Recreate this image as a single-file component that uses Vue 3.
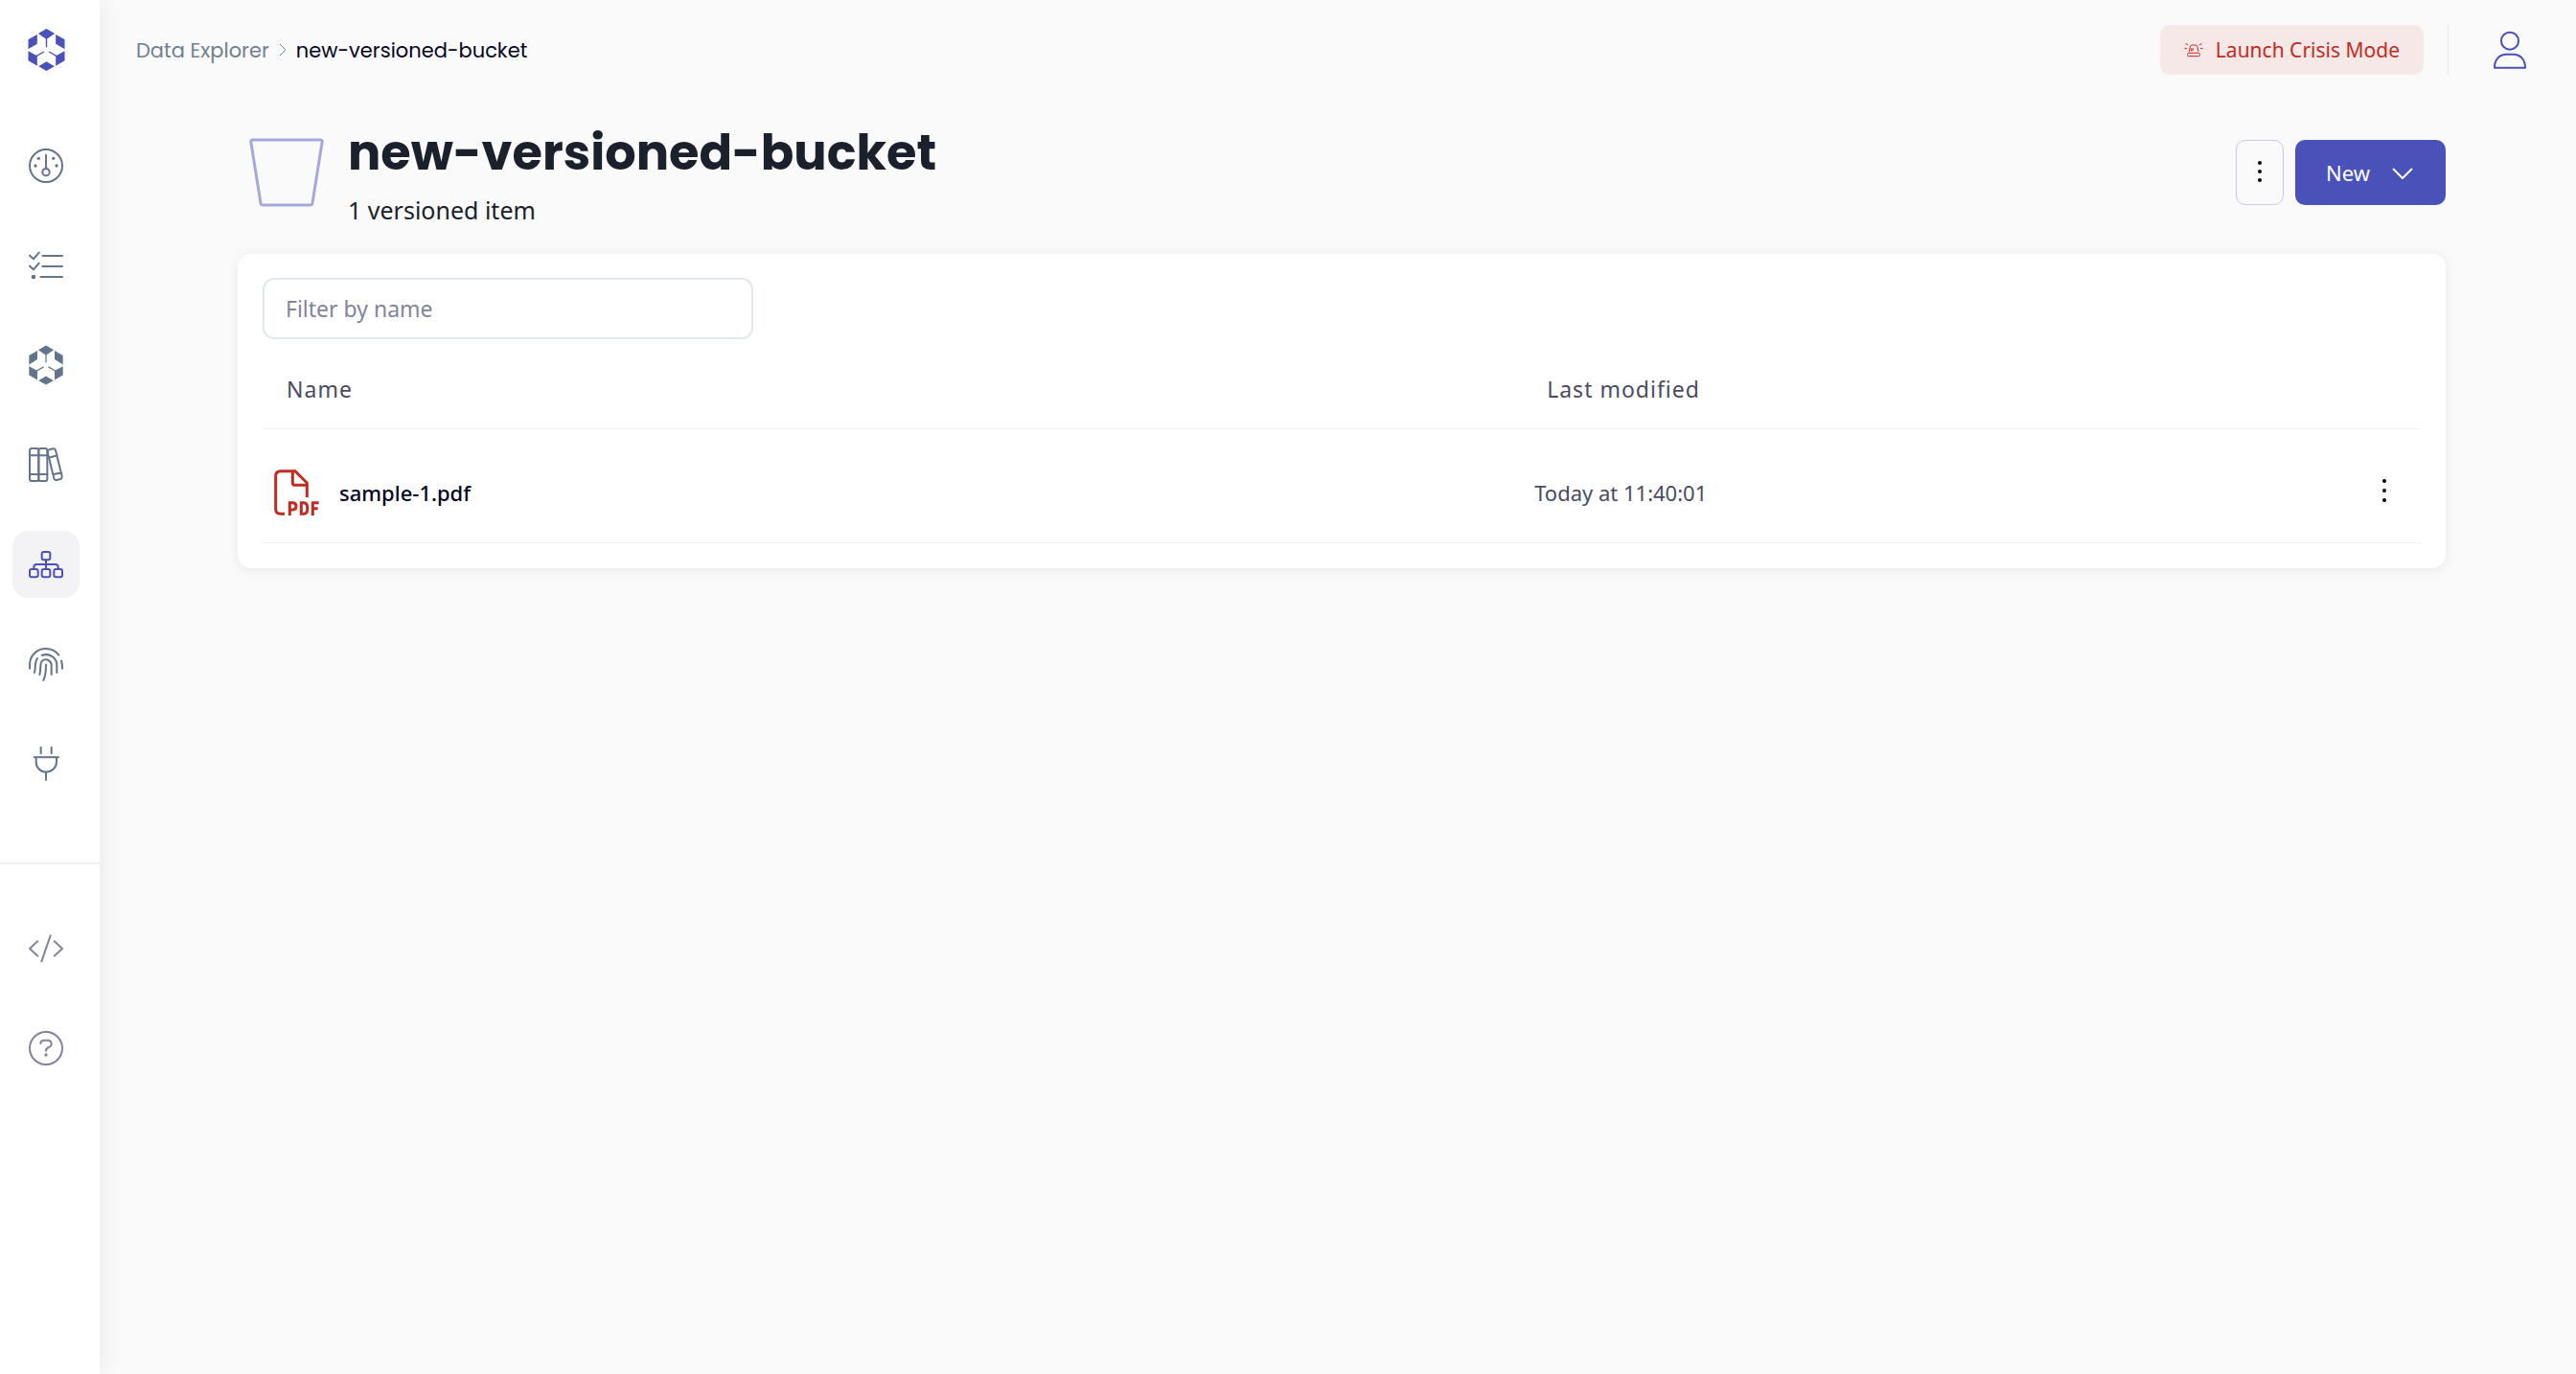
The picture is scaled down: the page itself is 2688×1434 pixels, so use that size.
<script setup>
import { ref, computed } from 'vue'

const filter = ref('')
const files = [{ name: 'sample-1.pdf', modified: 'Today at 11:40:01' }]
const shown = computed(() =>
  files.filter((f) => f.name.toLowerCase().includes(filter.value.toLowerCase()))
)
</script>

<template>
  <div class="app">
    <aside class="sidebar">
      <a class="logo" href="#" aria-label="Home">
        <svg width="39" height="44" viewBox="0 0 116 132" fill="currentColor">
          <path d="M58 0 84 15 58 33 32 15zM1 34 29 18v29L1 64zM87 18l28 16v30L87 47zM1 70l26 14 2 2v30L1 100zM115 70 89 84l-2 2v30l28-16zM58 103l25 15-25 14-25-14z" />
          <path d="M58 28v30M26 86l24-14M90 86 66 72" fill="none" stroke="currentColor" stroke-width="4" />
        </svg>
      </a>
      <nav class="nav" aria-label="Main">
        <a class="item" href="#" aria-label="Dashboard">
          <svg class="ico" viewBox="0 0 108 108">
            <circle cx="54" cy="54" r="51" />
            <circle cx="54" cy="74" r="11" />
            <path d="M54 62V20" />
            <g class="solid"><circle cx="21" cy="54" r="5" /><circle cx="87" cy="54" r="5" /><circle cx="31" cy="31" r="5" /><circle cx="77" cy="31" r="5" /></g>
          </svg>
        </a>
        <a class="item" href="#" aria-label="Tasks">
          <svg class="ico" viewBox="0 0 108 108">
            <path d="M3 23l12 11 17-20M3 56l12 11 17-20M43 24h62M43 57h62M37 90h68" />
            <g class="solid"><circle cx="15" cy="90" r="7" /></g>
          </svg>
        </a>
        <a class="item" href="#" aria-label="Platform">
          <svg width="36" height="42" viewBox="0 0 116 132" fill="currentColor">
            <path d="M58 0 84 15 58 33 32 15zM1 34 29 18v29L1 64zM87 18l28 16v30L87 47zM1 70l26 14 2 2v30L1 100zM115 70 89 84l-2 2v30l28-16zM58 103l25 15-25 14-25-14z" />
            <path d="M58 28v30M26 86l24-14M90 86 66 72" fill="none" stroke="currentColor" stroke-width="4" />
          </svg>
        </a>
        <a class="item" href="#" aria-label="Library">
          <svg class="ico" viewBox="0 0 108 108">
            <rect x="3" y="3" width="28" height="102" rx="7" />
            <rect x="31" y="3" width="27" height="102" rx="7" />
            <path d="M3 25h55M3 84h55" />
            <path d="M64 7l12-3q6-1 8 5l20 81q1 7-5 9l-12 3q-6 1-8-5L59 16q-1-7 5-9zM63 32l26-7M76 85l26-6" />
          </svg>
        </a>
        <a class="item active" href="#" aria-label="Data Explorer" aria-current="page">
          <svg class="ico" viewBox="0 0 108 108">
            <rect x="41" y="15" width="26" height="25" rx="6" />
            <rect x="3" y="69" width="26" height="25" rx="6" />
            <rect x="41" y="69" width="26" height="25" rx="6" />
            <rect x="79" y="69" width="26" height="25" rx="6" />
            <path d="M54 40v29M16 69v-6q0-9 9-9h58q9 0 9 9v6" />
          </svg>
        </a>
        <a class="item" href="#" aria-label="Identity">
          <svg class="ico" viewBox="0 0 108 108">
            <path d="M3 68V57C3 27 26 6 54 6c16 0 30 7 40 20M102 44q3 8 3 24" />
            <path d="M18 81c4-12-1-30 9-45M41 27c24-9 47 8 47 31v23" />
            <path d="M34 87c5-12-1-34 8-43 10-9 27-2 29 12v31" />
            <path d="M54 56c0 18-1 34-8 49" />
          </svg>
        </a>
        <a class="item" href="#" aria-label="Connections">
          <svg class="ico" viewBox="0 0 108 108">
            <path d="M38 3v19M71 3v19M17 34h76M23 34v15c0 18 14 31 31 31s33-13 33-31V34M54 80v25" />
          </svg>
        </a>
      </nav>
      <nav class="nav nav-low" aria-label="Support">
        <a class="item" href="#" aria-label="Developers">
          <svg class="ico" viewBox="0 0 108 108">
            <path d="M28 31 3 54l25 23M80 31l25 23-25 23M68 13 40 94" />
          </svg>
        </a>
        <a class="item" href="#" aria-label="Help">
          <svg class="ico" viewBox="0 0 108 108">
            <circle cx="54" cy="54" r="51" />
            <path d="M37 39q0-9 10-10h14q10 1 10 11 0 8-8 11-9 3-9 11" />
            <g class="solid"><circle cx="54" cy="75" r="5" /></g>
          </svg>
        </a>
      </nav>
    </aside>

    <div class="page">
      <header class="topbar">
        <nav class="crumbs" aria-label="Breadcrumb">
          <a href="#">Data Explorer</a>
          <svg width="8" height="14" viewBox="0 0 8 14"><path d="M1 1l6 6-6 6" fill="none" stroke="currentColor" /></svg>
          <span class="here">new-versioned-bucket</span>
        </nav>
        <div class="top-actions">
          <button class="crisis" type="button">
            <svg width="20" height="16" viewBox="0 0 60 48" fill="none" stroke="currentColor" stroke-width="3">
              <path d="M16 30l3-15q1-6 7-6h9q6 0 7 6l3 15M22 28l2-10M27 28l1-9" />
              <rect x="11" y="34" width="38" height="10" rx="3" />
              <path d="M1 20h8M51 20h8M4 5l8 3M56 5l-8 3" />
            </svg>
            Launch Crisis Mode
          </button>
          <button class="user" type="button" aria-label="Account">
            <svg width="34" height="40" viewBox="0 0 102 120" fill="none" stroke="currentColor" stroke-width="6" stroke-linejoin="round">
              <circle cx="51" cy="32" r="27" />
              <path d="M3 116c0-25 14-42 38-42h20c24 0 38 17 38 42z" />
            </svg>
          </button>
        </div>
      </header>

      <main class="content">
        <div class="heading">
          <svg class="bucket" width="78" height="72" viewBox="0 0 78 72">
            <path d="M4 2h70q3 0 2 3l-10 63q0 2-3 2H15q-3 0-3-2L2 5q-1-3 2-3z" fill="none" stroke="currentColor" stroke-width="3" />
          </svg>
          <div class="titles">
            <h1>new-versioned-bucket</h1>
            <p>1 versioned item</p>
          </div>
          <div class="actions">
            <button class="more" type="button" aria-label="More actions">
              <svg width="4" height="24" viewBox="0 0 4 24"><circle cx="2" cy="2" r="2" /><circle cx="2" cy="11" r="2" /><circle cx="2" cy="20" r="2" /></svg>
            </button>
            <button class="new" type="button">
              New
              <svg width="22" height="14" viewBox="0 0 22 14"><path d="M1 3l10 10L21 3" fill="none" stroke="currentColor" stroke-width="2" /></svg>
            </button>
          </div>
        </div>

        <section class="card">
          <input v-model="filter" class="filter" type="text" placeholder="Filter by name" aria-label="Filter by name" />
          <table>
            <thead>
              <tr>
                <th class="c-name" scope="col">Name</th>
                <th scope="col">Last modified</th>
                <th class="c-menu"></th>
              </tr>
            </thead>
            <tbody>
              <tr v-for="f in shown" :key="f.name">
                <td>
                  <a class="file" href="#">
                    <svg width="48" height="48" viewBox="0 0 144 144" fill="none" stroke="currentColor" stroke-width="9">
                      <path d="M33 139H20q-15 0-15-15V20Q5 5 20 5h46l37 37v45M58 5v36q0 8 8 8h40" />
                      <path d="M49 144v-40h9q11 0 11 11t-11 11h-9M85 104h6q13 0 13 13v9q0 13-13 13h-6zM121 144v-40h19M121 122h16" />
                    </svg>
                    {{ f.name }}
                  </a>
                </td>
                <td class="date">{{ f.modified }}</td>
                <td class="menu">
                  <button class="row-more" type="button" aria-label="File actions">
                    <svg width="4" height="28" viewBox="0 0 4 28"><circle cx="2" cy="2" r="2" /><circle cx="2" cy="12" r="2" /><circle cx="2" cy="22" r="2" /></svg>
                  </button>
                </td>
              </tr>
            </tbody>
          </table>
        </section>
      </main>
    </div>
  </div>
</template>

<style>
body {
  background: #fafafa;
}
</style>

<style scoped>
.app {
  display: flex;
  min-height: 100vh;
  background: #fafafa;
  color: #05051e;
  font-family: "Noto Sans", sans-serif;
  font-size: 22px;
}
.app *,
.app *::before {
  box-sizing: border-box;
}
a {
  color: inherit;
  text-decoration: none;
}
button {
  font: inherit;
  border: 0;
  padding: 0;
  background: none;
  cursor: pointer;
}
svg {
  display: block;
  flex: none;
}

.sidebar {
  flex: none;
  width: 104px;
  background: #fff;
  box-shadow: 0 0 24px rgba(0, 0, 0, 0.08);
}
.logo {
  display: flex;
  justify-content: center;
  padding: 30px 8px 0 0;
  height: 104px;
  color: #4a52ba;
}
.nav {
  display: flex;
  flex-direction: column;
  align-items: center;
  gap: 34px;
  padding: 34px 9px 68px 0;
  color: #64748b;
}
.nav-low {
  border-top: 2px solid #f0f0f2;
  padding-top: 53px;
  color: #83849b;
}
.item {
  display: grid;
  place-items: center;
  width: 70px;
  height: 70px;
  border-radius: 16px;
}
.active {
  background: #f3f3f5;
  color: #4a52ba;
}
.ico {
  width: 36px;
  height: 36px;
  fill: none;
  stroke: currentColor;
  stroke-width: 6;
  stroke-linecap: round;
  stroke-linejoin: round;
}
.solid {
  fill: currentColor;
  stroke: none;
}

.page {
  flex: 1;
  min-width: 0;
}
.topbar {
  display: flex;
  justify-content: space-between;
  align-items: center;
  height: 104px;
  padding: 0 52px 0 38px;
}
.crumbs {
  display: flex;
  align-items: center;
  gap: 10px;
  color: #718090;
  font-family: Poppins, Inter, sans-serif;
  font-size: 21px;
}
.here {
  color: #05051e;
}
.top-actions {
  display: flex;
  align-items: center;
}
.crisis {
  display: flex;
  align-items: center;
  gap: 13px;
  height: 52px;
  padding: 0 25px;
  border-radius: 10px;
  background: #f6e8e7;
  color: #c12b23;
  font-size: 21px;
}
.user {
  display: flex;
  align-items: center;
  height: 52px;
  margin-left: 25px;
  padding-left: 47px;
  border-left: 1px solid #e2e8f0;
  color: #4a52ba;
}

.content {
  padding: 0 136px 64px 144px;
}
.heading {
  display: flex;
  align-items: center;
  height: 161px;
  padding: 0 0 10px 12px;
}
.bucket {
  color: #a5a8dc;
}
.titles {
  flex: 1;
  margin: 6px 0 0 25px;
}
h1 {
  margin: 0;
  color: #1a202c;
  font-family: Poppins, Inter, sans-serif;
  font-size: 51px;
  font-weight: 700;
  line-height: 64px;
}
p {
  margin: 8px 0 0;
  color: #1a202c;
  font-size: 25px;
  line-height: 40px;
}
.actions {
  display: flex;
  gap: 12px;
}
.more {
  display: grid;
  place-items: center;
  width: 50px;
  height: 68px;
  border: 1px solid #c7c9e8;
  border-radius: 10px;
}
.new {
  display: flex;
  align-items: center;
  gap: 23px;
  height: 68px;
  padding: 0 34px 0 32px;
  border-radius: 10px;
  background: #4a52ba;
  color: #fff;
}

.card {
  padding: 25px 26px 26px;
  border-radius: 14px;
  background: #fff;
  box-shadow: 0 2px 12px rgba(0, 0, 0, 0.08);
}
.filter {
  display: block;
  width: 512px;
  max-width: 100%;
  height: 64px;
  padding: 0 22px;
  border: 2px solid #e2e8f0;
  border-radius: 12px;
  background: #fff;
  color: #05051e;
  font: inherit;
  font-size: 23px;
}
.filter::placeholder {
  color: #83849b;
  opacity: 1;
}
table {
  width: 100%;
  margin-top: 12px;
  border-collapse: separate;
  border-spacing: 0;
  table-layout: fixed;
}
th,
td {
  border-bottom: 1px solid #f1f1f3;
  text-align: left;
}
th {
  height: 82px;
  padding: 0 25px 2px;
  color: #4a4b60;
  font-size: 23px;
  font-weight: 400;
  letter-spacing: 1px;
}
.c-name {
  width: 58.4%;
}
.c-menu {
  width: 12%;
}
td {
  height: 119px;
  padding: 42px 12px 28px;
}
.file {
  display: flex;
  align-items: center;
  gap: 20px;
  font-weight: 500;
}
.file svg {
  color: #c12b23;
}
.date {
  color: #4a4b60;
}
.menu .row-more {
  display: flex;
  justify-content: center;
  width: 28px;
  margin: 0 12px 0 auto;
}
</style>
